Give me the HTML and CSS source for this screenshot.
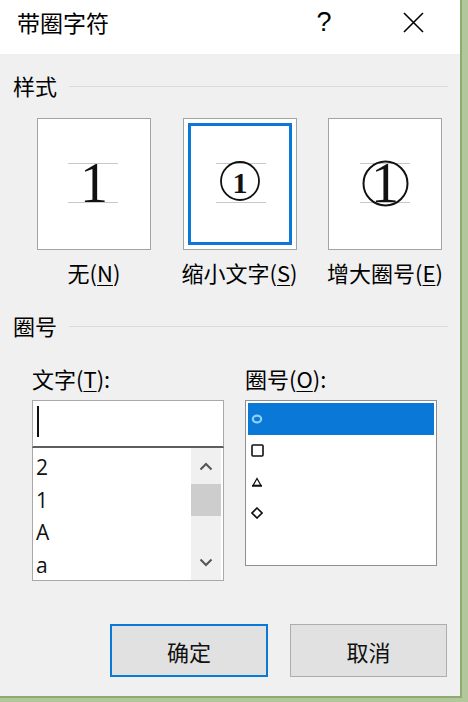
FILE: index.html
```html
<!DOCTYPE html>
<html lang="zh-CN">
<head>
<meta charset="utf-8">
<title>带圈字符</title>
<link rel="stylesheet" href="styles.css">
</head>
<body>
<div class="dialog">
  <div class="titlebar">
    <span class="title">带圈字符</span>
    <span class="help">?</span>
    <svg class="close" width="21" height="21" viewBox="0 0 21 21"><path d="M1 1L20 20M20 1L1 20" stroke="#000" stroke-width="1.6" fill="none"/></svg>
  </div>

  <div class="group-head"><span>样式</span><i class="rule"></i></div>

  <div class="styles">
    <div class="style-opt">
      <div class="box"><div class="box-in">
        <svg width="98" height="116" viewBox="0 0 98 116">
          <path d="M23 37.5H73M23 76.5H73" stroke="#c8c8c8" stroke-width="1"/>
          <text x="49" y="76" class="serif big" text-anchor="middle">1</text>
        </svg>
      </div></div>
      <div class="opt-label">无(<u>N</u>)</div>
    </div>
    <div class="style-opt">
      <div class="box"><div class="box-in sel">
        <svg width="98" height="116" viewBox="0 0 98 116">
          <path d="M25 37.5H75M25 76.5H75" stroke="#c8c8c8" stroke-width="1"/>
          <circle cx="49" cy="55" r="19" stroke="#111" stroke-width="1.8" fill="none"/>
          <text x="49" y="67" class="serif small" text-anchor="middle">1</text>
        </svg>
      </div></div>
      <div class="opt-label">缩小文字(<u>S</u>)</div>
    </div>
    <div class="style-opt">
      <div class="box"><div class="box-in">
        <svg width="98" height="116" viewBox="0 0 98 116">
          <path d="M24 37.5H74M24 76.5H74" stroke="#c8c8c8" stroke-width="1"/>
          <circle cx="49.5" cy="57.5" r="22" stroke="#111" stroke-width="2" fill="none"/>
          <text x="49" y="76" class="serif big" text-anchor="middle">1</text>
        </svg>
      </div></div>
      <div class="opt-label">增大圈号(<u>E</u>)</div>
    </div>
  </div>

  <div class="group-head second"><span>圈号</span><i class="rule"></i></div>

  <div class="fields">
    <div class="field">
      <div class="field-label">文字(<u>T</u>):</div>
      <div class="textbox"><i class="caret"></i></div>
      <div class="listbox">
        <div class="items">
          <div class="item">2</div>
          <div class="item">1</div>
          <div class="item">A</div>
          <div class="item">a</div>
        </div>
        <div class="scrollbar">
          <div class="arrow"><svg width="14" height="9" viewBox="0 0 14 9"><path d="M1.5 7.5L7 2L12.5 7.5" stroke="#555" stroke-width="2" fill="none"/></svg></div>
          <div class="thumb"></div>
          <div class="track"></div>
          <div class="arrow"><svg width="14" height="9" viewBox="0 0 14 9"><path d="M1.5 1.5L7 7L12.5 1.5" stroke="#555" stroke-width="2" fill="none"/></svg></div>
        </div>
      </div>
    </div>
    <div class="field">
      <div class="field-label">圈号(<u>O</u>):</div>
      <div class="enclose-list">
        <div class="sym selected"><svg width="12" height="10" viewBox="0 0 12 10"><ellipse cx="6" cy="5" rx="4.2" ry="3.4" stroke="#8fd0ff" stroke-width="2.2" fill="none"/></svg></div>
        <div class="sym"><svg width="13" height="13" viewBox="0 0 13 13"><rect x="1" y="1" width="11" height="11" rx="1" stroke="#111" stroke-width="1.6" fill="none"/></svg></div>
        <div class="sym"><svg width="12" height="10" viewBox="0 0 12 10"><path d="M6 1.5L10 8.5H2Z" stroke="#111" stroke-width="1.3" fill="none"/><path d="M1 8.8H11" stroke="#111" stroke-width="1.8"/></svg></div>
        <div class="sym"><svg width="12" height="12" viewBox="0 0 12 12"><path d="M6 1L11 6L6 11L1 6Z" stroke="#111" stroke-width="1.6" fill="none"/></svg></div>
      </div>
    </div>
  </div>

  <div class="buttons">
    <button class="btn default">确定</button>
    <button class="btn">取消</button>
  </div>
</div>
</body>
</html>
```
FILE: styles.css
```css
html, body {
  margin: 0;
  padding: 0;
}
body {
  width: 468px;
  height: 702px;
  overflow: hidden;
  background: #b2c89c;
  font-family: "Noto Sans CJK SC", "Noto Sans", sans-serif;
  color: #000;
}
.dialog {
  width: 460px;
  height: 696px;
  background: #f0f0f0;
  border-right: 2px solid #8dab70;
  border-bottom: 2px solid #8dab70;
  display: flex;
  flex-direction: column;
}
.titlebar {
  height: 54px;
  box-sizing: border-box;
  padding-bottom: 10px;
  flex: none;
  background: #fff;
  display: flex;
  align-items: center;
}
.title {
  margin-left: 17px;
  font-size: 23px;
  line-height: 28px;
  color: #000;
}
.help {
  margin-left: auto;
  width: 20px;
  text-align: center;
  font-family: "Liberation Sans", sans-serif;
  font-size: 27px;
  line-height: 28px;
  color: #000;
}
.close {
  margin-left: 69px;
  margin-right: 36px;
  display: block;
}
.group-head {
  display: flex;
  align-items: center;
  margin-top: 17px;
  padding-left: 13px;
  padding-right: 12px;
  font-size: 22px;
  line-height: 28px;
  height: 28px;
}
.group-head.second {
  margin-top: 25px;
}
.rule {
  flex: 1;
  height: 1px;
  background: #d6dbe0;
  margin-left: 12px;
  margin-top: 2px;
}
.styles {
  display: flex;
  gap: 31.5px;
  padding-left: 37px;
  margin-top: 19px;
}
.style-opt {
  width: 114px;
  display: flex;
  flex-direction: column;
  align-items: center;
}
.box {
  width: 114px;
  height: 132px;
  box-sizing: border-box;
  border: 1px solid #a3a3a3;
  background: #fff;
  padding: 4px;
}
.box-in {
  width: 104px;
  height: 122px;
  box-sizing: border-box;
  border: 3px solid transparent;
}
.box-in.sel {
  border-color: #0a78d4;
}
.box-in svg {
  display: block;
}
.serif {
  font-family: "Liberation Serif", "DejaVu Serif", serif;
  fill: #111;
}
.serif.big {
  font-size: 56px;
}
.serif.small {
  font-size: 30px;
  font-weight: bold;
}
.opt-label {
  margin-top: 8px;
  font-size: 22px;
  line-height: 28px;
  white-space: nowrap;
}
u {
  text-decoration-thickness: 1px;
  text-underline-offset: 3px;
}
.fields {
  display: flex;
  gap: 21px;
  padding-left: 32px;
  margin-top: 25px;
}
.field {
  width: 192px;
  display: flex;
  flex-direction: column;
}
.field-label {
  font-size: 22px;
  line-height: 28px;
  height: 28px;
  white-space: nowrap;
  margin-bottom: 8px;
}
.textbox {
  height: 48px;
  box-sizing: border-box;
  background: #fff;
  border: 1px solid #a9a9a9;
  border-bottom: 2px solid #5e5e5e;
  padding: 5px 0 0 4px;
}
.caret {
  display: block;
  width: 1.5px;
  height: 31px;
  background: #111;
}
.listbox {
  height: 133px;
  box-sizing: border-box;
  background: #fff;
  border: 1px solid #a9a9a9;
  border-top: none;
  display: flex;
  padding-right: 2px;
}
.items {
  flex: 1;
  padding-top: 3px;
  padding-left: 3px;
}
.item {
  height: 32.5px;
  line-height: 32.5px;
  font-family: "Open Sans", "Noto Sans", sans-serif;
  font-size: 21px;
  color: #111;
}
.scrollbar {
  width: 30px;
  background: #f0f0f0;
  display: flex;
  flex-direction: column;
}
.arrow {
  height: 36px;
  display: flex;
  align-items: center;
  justify-content: center;
}
.arrow svg {
  display: block;
}
.thumb {
  height: 32px;
  background: #cdcdcd;
}
.track {
  flex: 1;
}
.enclose-list {
  height: 166px;
  box-sizing: border-box;
  background: #fff;
  border: 1px solid #8c8f94;
  padding: 2px;
}
.sym {
  height: 31.5px;
  display: flex;
  align-items: center;
  padding-left: 3px;
}
.sym svg {
  display: block;
}
.sym.selected {
  background: #0a78d7;
}
.buttons {
  display: flex;
  gap: 22px;
  padding-left: 110px;
  margin-top: 43px;
}
.btn {
  width: 158px;
  height: 53px;
  box-sizing: border-box;
  background: #e1e1e1;
  border: 1px solid #adadad;
  font-family: "Noto Sans CJK SC", sans-serif;
  font-size: 22px;
  color: #111;
  padding: 0;
  margin: 0;
}
.btn.default {
  border: 2px solid #0a78d7;
}
.btn + .btn {
  width: 157px;
}
```
